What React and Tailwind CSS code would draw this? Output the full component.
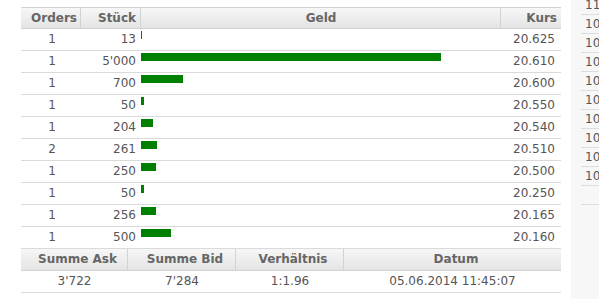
import React from "react";

const rows = [
  { o: 1, s: "13", n: 13, k: "20.625" },
  { o: 1, s: "5'000", n: 5000, k: "20.610" },
  { o: 1, s: "700", n: 700, k: "20.600" },
  { o: 1, s: "50", n: 50, k: "20.550" },
  { o: 1, s: "204", n: 204, k: "20.540" },
  { o: 2, s: "261", n: 261, k: "20.510" },
  { o: 1, s: "250", n: 250, k: "20.500" },
  { o: 1, s: "50", n: 50, k: "20.250" },
  { o: 1, s: "256", n: 256, k: "20.165" },
  { o: 1, s: "500", n: 500, k: "20.160" },
];

const side = ["11", "10", "10", "10", "10", "10", "10", "10", "10", "10", ""];

const hdr =
  "h-[22px] flex bg-gradient-to-b from-[#f7f7f7] to-[#e4e4e4] border-y border-[#d2d2d2] font-bold text-[#666] leading-[20px]";

export default function App() {
  return (
    <div className="flex w-[599px] h-[299px] overflow-hidden bg-white font-['DejaVu_Sans',Verdana,sans-serif] text-[12px] text-[#555]">
      <div className="w-[21px] shrink-0" />
      <div className="w-[540px] shrink-0 pt-[7px]">
        <div className={hdr}>
          <div className="w-[60px] border-r border-[#d2d2d2] text-center pl-[7px]">Orders</div>
          <div className="w-[60px] border-r border-[#d2d2d2] text-right pr-[4px]">Stück</div>
          <div className="w-[360px] border-r border-[#d2d2d2] text-center pl-[1px]">Geld</div>
          <div className="w-[60px] text-right pr-[4px]">Kurs</div>
        </div>
        {rows.map((r, i) => (
          <div key={i} className="h-[22px] flex border-b border-[#dadada] leading-[21px]">
            <div className="w-[60px] text-center pl-[2px]">{r.o}</div>
            <div className="w-[60px] text-right pr-[5px]">{r.s}</div>
            <div className="w-[360px] pt-[2px]">
              <div
                className="h-[8px] bg-[#008000]"
                style={{ width: Math.max(1, Math.round((r.n / 5000) * 300)) + "px" }}
              />
            </div>
            <div className="w-[60px] text-right pr-[6px]">{r.k}</div>
          </div>
        ))}
        <div className={hdr + " border-t-0 h-[22px]"}>
          <div className="w-[107px] border-r border-[#d2d2d2] text-center pl-[7px]">Summe Ask</div>
          <div className="w-[108px] border-r border-[#d2d2d2] text-center pl-[7px]">Summe Bid</div>
          <div className="w-[108px] border-r border-[#d2d2d2] text-center pl-[7px]">Verhältnis</div>
          <div className="w-[217px] text-center pl-[7px]">Datum</div>
        </div>
        <div className="h-[22px] flex border-b border-[#dadada] leading-[21px]">
          <div className="w-[107px] text-center">3'722</div>
          <div className="w-[108px] text-center">7'284</div>
          <div className="w-[108px] text-center">1:1.96</div>
          <div className="w-[217px] text-center">05.06.2014 11:45:07</div>
        </div>
      </div>
      <div className="w-[10px] shrink-0" />
      <div className="flex-1 bg-[#f7f7f7] pl-[10px] whitespace-nowrap">
        <div className="-mt-[4px]">
          {side.map((t, i) => (
            <div key={i} className="h-[19px] border-b border-[#dddddd] pl-[4px] leading-[18px]">
              {t}
            </div>
          ))}
        </div>
      </div>
    </div>
  );
}
